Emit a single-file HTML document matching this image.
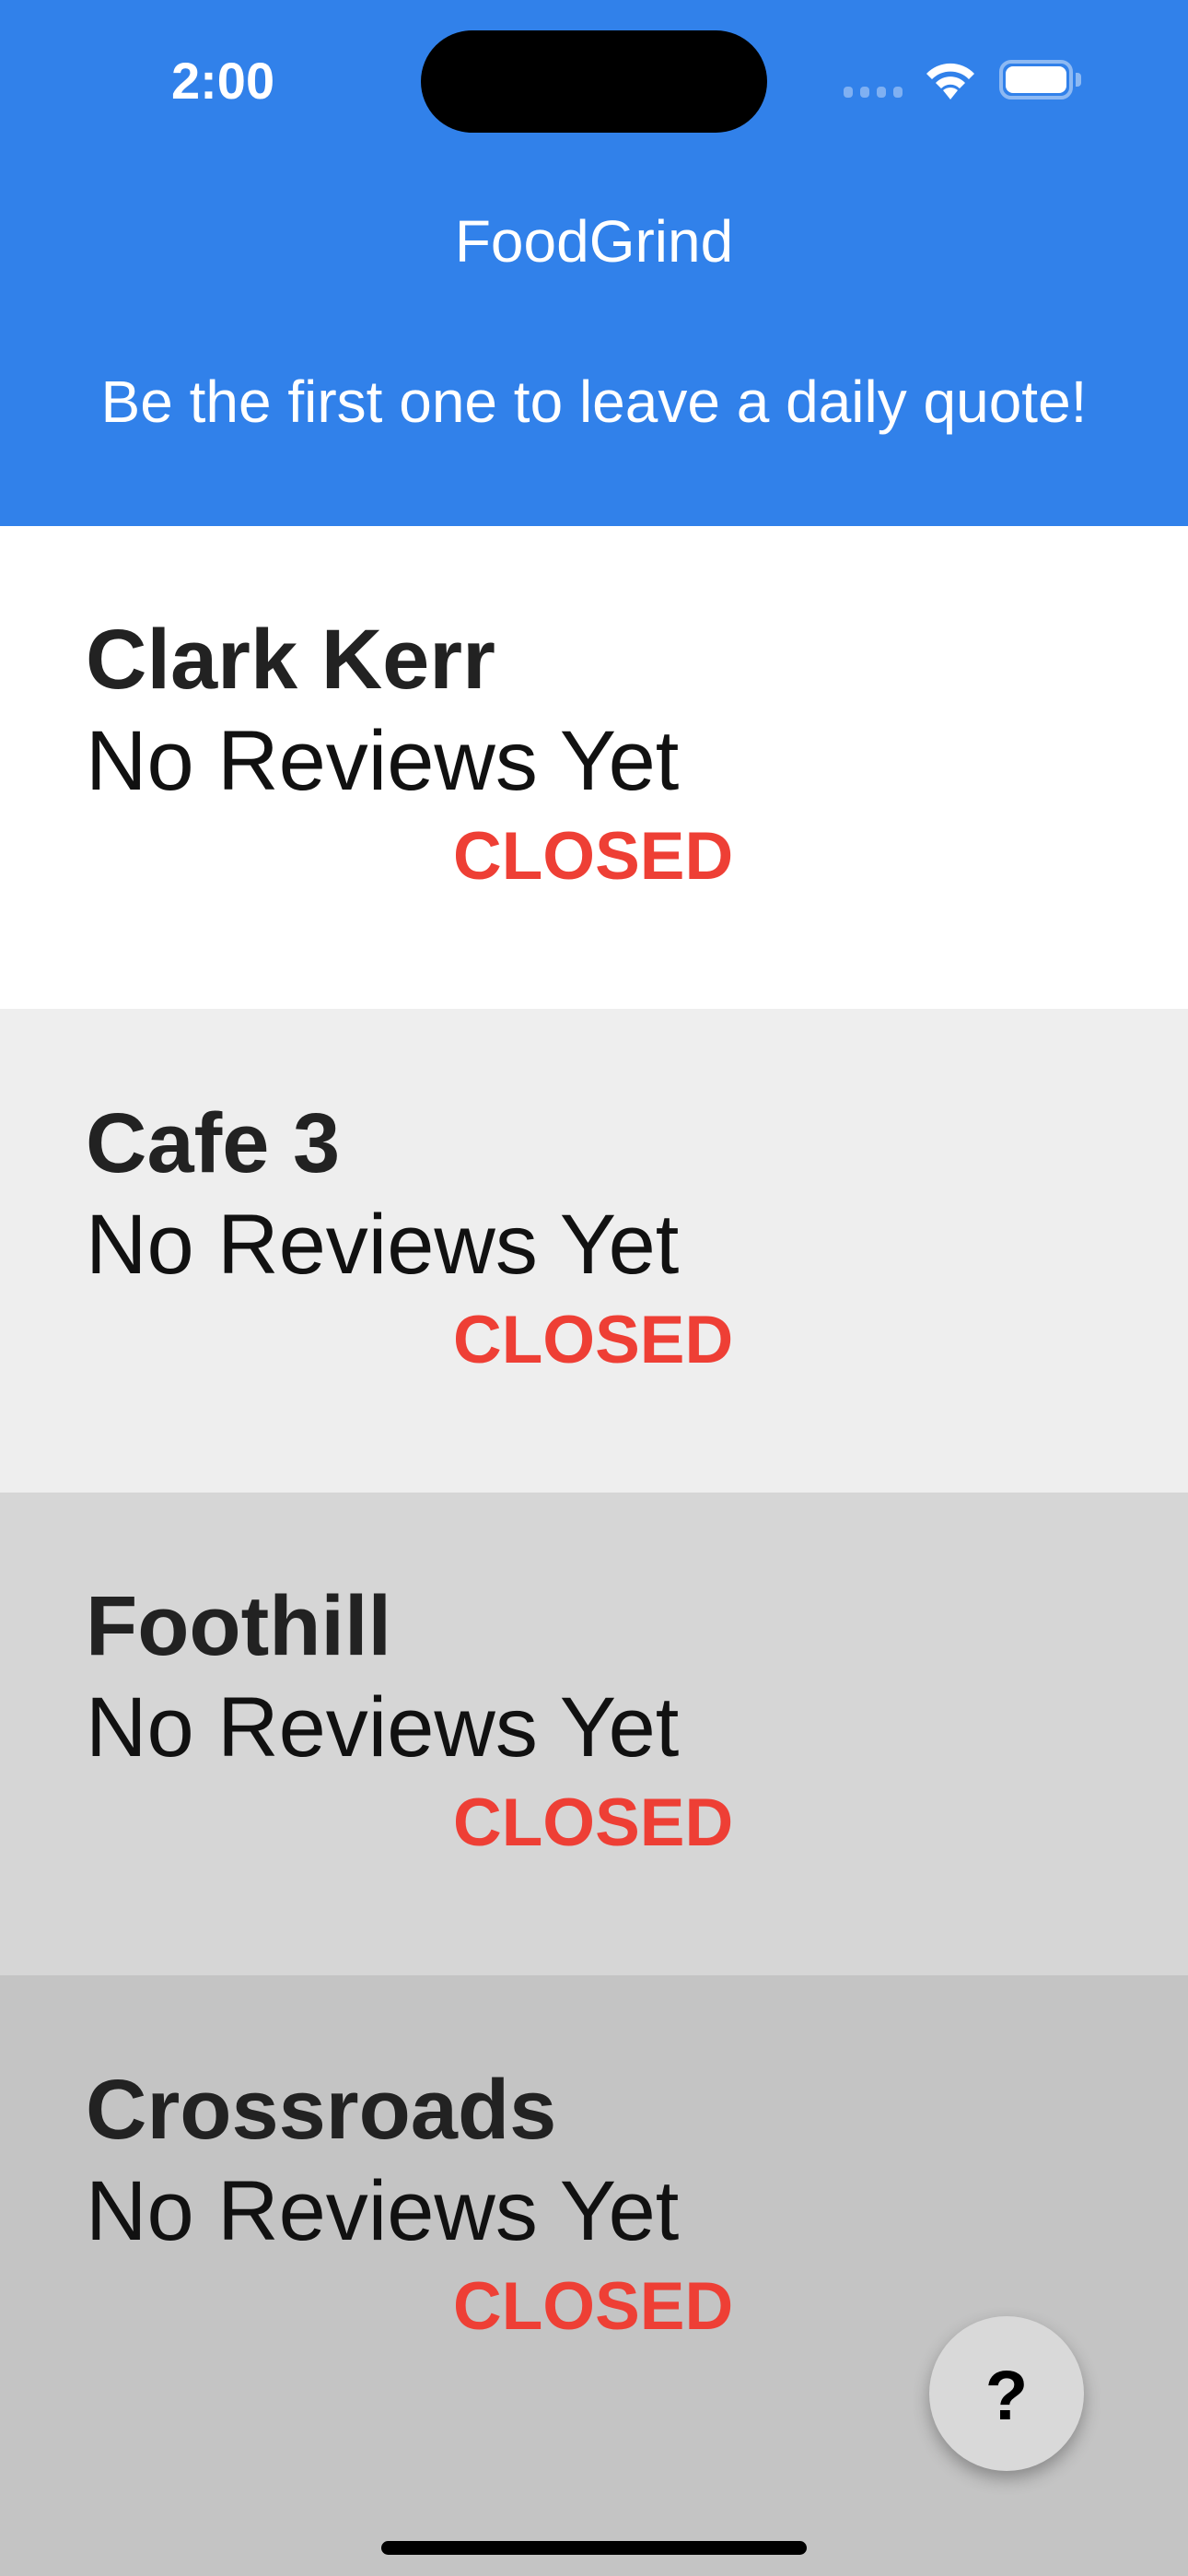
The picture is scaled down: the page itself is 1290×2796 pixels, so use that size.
<!DOCTYPE html>
<html><head><meta charset="utf-8"><style>
*{margin:0;padding:0;box-sizing:border-box}
body{width:1290px;height:2796px;position:relative;overflow:hidden;font-family:"Liberation Sans",Arial,sans-serif;background:#c4c4c4}
.hdr{position:absolute;left:0;top:0;width:1290px;height:571px;background:#3181ea}
.t{position:absolute;white-space:nowrap;line-height:1}
.sec{position:absolute;left:0;width:1290px}
.name{position:absolute;left:93px;font-weight:bold;font-size:92px;color:#222;line-height:1}
.rev{position:absolute;left:93px;font-size:92px;color:#111;line-height:1}
.cl{position:absolute;left:492px;width:306px;font-weight:bold;font-size:73px;color:#ee3f35;line-height:1;text-align:left}
</style></head><body>
<div class="hdr"></div>
<div class="t" style="left:186px;top:60px;font-size:56px;color:#fff;font-weight:bold">2:00</div>
<div style="position:absolute;left:457px;top:33px;width:376px;height:111px;border-radius:56px;background:#000"></div>
<div style="position:absolute;left:916px;top:94px;width:64px;height:12px">
<div style="position:absolute;left:0;top:0;width:10px;height:12px;border-radius:4px;background:#7fb0f2"></div>
<div style="position:absolute;left:18px;top:0;width:10px;height:12px;border-radius:4px;background:#7fb0f2"></div>
<div style="position:absolute;left:36px;top:0;width:10px;height:12px;border-radius:4px;background:#7fb0f2"></div>
<div style="position:absolute;left:54px;top:0;width:10px;height:12px;border-radius:4px;background:#7fb0f2"></div>
</div>
<svg style="position:absolute;left:1002px;top:64px" width="60" height="46" viewBox="0 0 60 46"><path d="M30 44 L22 34 A12 12 0 0 1 38 34 Z" fill="#fff"/><path d="M14 26 A22 22 0 0 1 46 26 L40 32 A14 14 0 0 0 20 32 Z" fill="#fff"/><path d="M4 16 A36 36 0 0 1 56 16 L50 22 A28 28 0 0 0 10 22 Z" fill="#fff"/></svg>
<div style="position:absolute;left:1085px;top:65px;width:80px;height:43px;border:4px solid #8db9f3;border-radius:13px"></div>
<div style="position:absolute;left:1092px;top:72px;width:66px;height:29px;background:#fff;border-radius:8px"></div>
<div style="position:absolute;left:1168px;top:79px;width:6px;height:15px;background:#8db9f3;border-radius:0 4px 4px 0"></div>
<div class="t" style="left:0;width:1290px;text-align:center;top:230px;font-size:64px;color:#fff">FoodGrind</div>
<div class="t" style="left:0;width:1290px;text-align:center;top:404px;font-size:64px;color:#fff">Be the first one to leave a daily quote!</div>

<div class="sec" style="top:571px;height:524px;background:#fff"></div>
<div class="sec" style="top:1095px;height:525px;background:#eeeeee"></div>
<div class="sec" style="top:1620px;height:524px;background:#d6d6d6"></div>
<div class="sec" style="top:2144px;height:652px;background:#c4c4c4"></div>

<div class="name" style="top:670px">Clark Kerr</div>
<div class="rev" style="top:780px">No Reviews Yet</div>
<div class="cl" style="top:893px">CLOSED</div>

<div class="name" style="top:1195px">Cafe 3</div>
<div class="rev" style="top:1305px">No Reviews Yet</div>
<div class="cl" style="top:1418px">CLOSED</div>

<div class="name" style="top:1719px">Foothill</div>
<div class="rev" style="top:1829px">No Reviews Yet</div>
<div class="cl" style="top:1942px">CLOSED</div>

<div class="name" style="top:2244px">Crossroads</div>
<div class="rev" style="top:2354px">No Reviews Yet</div>
<div class="cl" style="top:2467px">CLOSED</div>

<div style="position:absolute;left:1009px;top:2514px;width:168px;height:168px;border-radius:50%;background:#d9d9d9;box-shadow:0 8px 18px rgba(0,0,0,0.3)"></div>
<div class="t" style="left:1009px;width:168px;text-align:center;top:2563px;font-size:76px;font-weight:bold;color:#000">?</div>
<div style="position:absolute;left:414px;top:2758px;width:462px;height:15px;border-radius:8px;background:#000"></div>
</body></html>
